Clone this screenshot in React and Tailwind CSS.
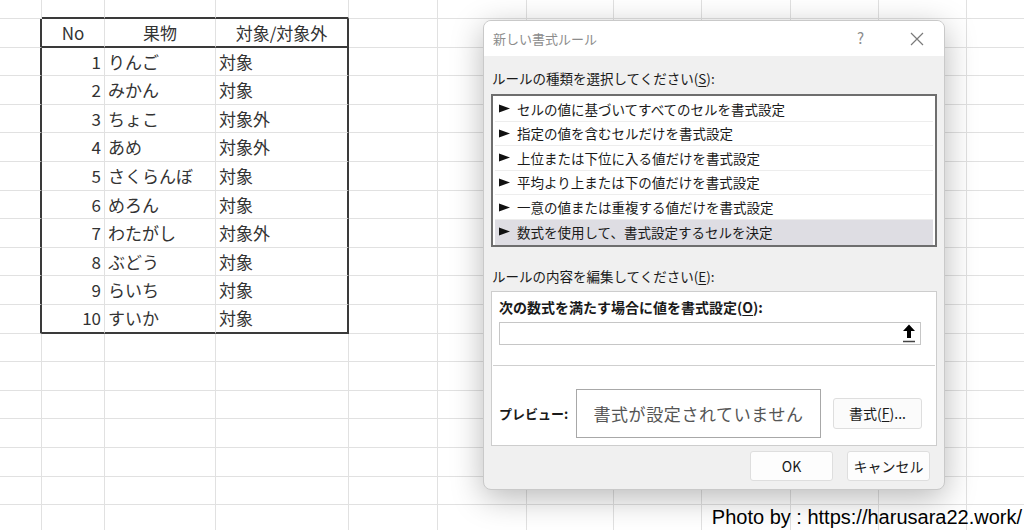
const colWidths = [42, 63, 111, 133, 89, 89, 87, 88, 89, 88, 88, 88];

const fruits = [
  ["1", "りんご", "対象"],
  ["2", "みかん", "対象"],
  ["3", "ちょこ", "対象外"],
  ["4", "あめ", "対象外"],
  ["5", "さくらんぼ", "対象"],
  ["6", "めろん", "対象"],
  ["7", "わたがし", "対象外"],
  ["8", "ぶどう", "対象"],
  ["9", "らいち", "対象"],
  ["10", "すいか", "対象"],
];

const ruleTypes = [
  "セルの値に基づいてすべてのセルを書式設定",
  "指定の値を含むセルだけを書式設定",
  "上位または下位に入る値だけを書式設定",
  "平均より上または下の値だけを書式設定",
  "一意の値または重複する値だけを書式設定",
  "数式を使用して、書式設定するセルを決定",
];

function cellText(r, c) {
  if (r === 1) return ["No", "果物", "対象/対象外"][c - 1];
  const row = fruits[r - 2];
  return row ? row[c - 1] : "";
}

function Sheet() {
  const rows = Array.from({ length: 19 }, (_, i) => i);
  return (
    <div className="flex flex-col">
      {rows.map((r) => (
        <div
          key={r}
          className={`flex ${r === 0 ? "h-[19px]" : "h-[28.6px]"}`}
        >
          {colWidths.map((w, c) => {
            const inTable = r >= 1 && r <= 11 && c >= 1 && c <= 3;
            const inTableRow = r >= 1 && r <= 11;
            let cls = "shrink-0 border-r border-b border-[#e1e1e1] flex items-center text-[17px] text-[#333] overflow-hidden whitespace-nowrap";
            if (inTableRow && (c === 0 || c === 3)) cls += " border-r-2 border-r-[#3a3a3a]";
            if ((r === 0 || r === 1 || r === 11) && c >= 1 && c <= 3) cls += " border-b-2 border-b-[#3a3a3a]";
            if (inTable && r === 1) cls += " justify-center";
            else if (inTable && c === 1) cls += " justify-end pr-[3px]";
            else if (inTable) cls += " pl-[3px]";
            return (
              <div key={c} className={cls} style={{ width: w }}>
                {inTable ? cellText(r, c) : ""}
              </div>
            );
          })}
        </div>
      ))}
    </div>
  );
}

function U({ children }) {
  return <span className="underline underline-offset-2">{children}</span>;
}

function Dialog() {
  return (
    <div className="absolute left-[483px] top-[20px] w-[462px] h-[470px] rounded-[8px] border border-[#c9c9c9] bg-[#f0f0f0] shadow-[0_8px_32px_rgba(0,0,0,0.28)] overflow-hidden flex flex-col text-[13px] text-[#1a1a1a]">
      <div className="h-[35px] bg-white flex items-center pl-[9px] pr-[20px]">
        <span className="text-[#8c8c8c] text-[13px]">新しい書式ルール</span>
        <span className="ml-auto text-[#8c8c8c] text-[15px] mr-[46px]">?</span>
        <svg width="14" height="14" viewBox="0 0 14 14" className="text-[#7a7a7a]">
          <path d="M1 1L13 13M13 1L1 13" stroke="currentColor" strokeWidth="1.2" />
        </svg>
      </div>
      <div className="flex flex-col px-[7px] pt-[11px]">
        <div className="h-[22px] flex items-center pl-[1px] text-[13.5px]">
          ルールの種類を選択してください(<U>S</U>):
        </div>
        <div className="mt-[5px] h-[153px] border-2 border-[#6e6e6e] bg-white px-[2px] pt-[1px]">
          {ruleTypes.map((t, i) => (
            <div
              key={t}
              className={`h-[24.6px] flex items-center pl-[4px] gap-[7px] border-b text-[13.5px] ${
                i === 5 ? "bg-[#dedde3] border-transparent" : "border-[#ededed]"
              }`}
            >
              <svg width="11" height="9" viewBox="0 0 11 9">
                <path d="M0 0.5L11 4.5L0 8.5Z" fill="#111" />
              </svg>
              <span>{t}</span>
            </div>
          ))}
        </div>
        <div className="mt-[18px] h-[22px] flex items-center pl-[1px] text-[13.5px]">
          ルールの内容を編集してください(<U>E</U>):
        </div>
        <div className="mt-[4px] h-[155px] border border-[#cdcdcd] bg-white flex flex-col">
          <div className="pl-[7px] pr-[15px] pt-[5px]">
            <div className="h-[20px] flex items-center font-bold text-[14px]">
              次の数式を満たす場合に値を書式設定(<U>O</U>):
            </div>
            <div className="mt-[5px] h-[23px] border border-[#c6c6c6] flex justify-end">
              <div className="w-[22px] flex items-center justify-center">
                <svg width="14" height="19" viewBox="0 0 14 19">
                  <path d="M7 0.5L1 7H5V14H9V7H13Z" fill="#000" />
                  <path d="M1 17.5H13" stroke="#444" strokeWidth="1.4" />
                </svg>
              </div>
            </div>
          </div>
          <div className="mt-[20px] mx-[1px] border-t border-[#cfcfcf]" />
          <div className="flex items-center pl-[7px] mt-[23px]">
            <span className="font-bold text-[13px] w-[77px]">プレビュー:</span>
            <div className="w-[245px] h-[49px] border border-[#a8a8a8] flex items-center justify-center text-[17px] text-[#555] tracking-[0.6px]">
              書式が設定されていません
            </div>
            <button className="ml-[12px] w-[89px] h-[31px] rounded-[3px] border border-[#dedede] bg-[#fbfbfb] text-[14px]">
              書式(<U>F</U>)...
            </button>
          </div>
        </div>
        <div className="flex justify-end gap-[14px] mt-[5px] pr-[7px]">
          <button className="w-[83px] h-[30px] rounded-[3px] border border-[#dedede] bg-[#fdfdfd] text-[14px]">
            OK
          </button>
          <button className="w-[83px] h-[30px] rounded-[3px] border border-[#dedede] bg-[#fdfdfd] text-[14px]">
            キャンセル
          </button>
        </div>
      </div>
    </div>
  );
}

export default function App() {
  return (
    <div
      className="relative w-[1024px] h-[530px] overflow-hidden bg-white"
      style={{ fontFamily: '"Noto Sans CJK JP", "Noto Sans", sans-serif' }}
    >
      <Sheet />
      <Dialog />
      <div className="absolute right-[2px] bottom-[1px] text-[20px] text-black leading-none pb-[2px] font-['Liberation_Sans',Arial,sans-serif]">
        Photo by : https://harusara22.work/
      </div>
    </div>
  );
}
